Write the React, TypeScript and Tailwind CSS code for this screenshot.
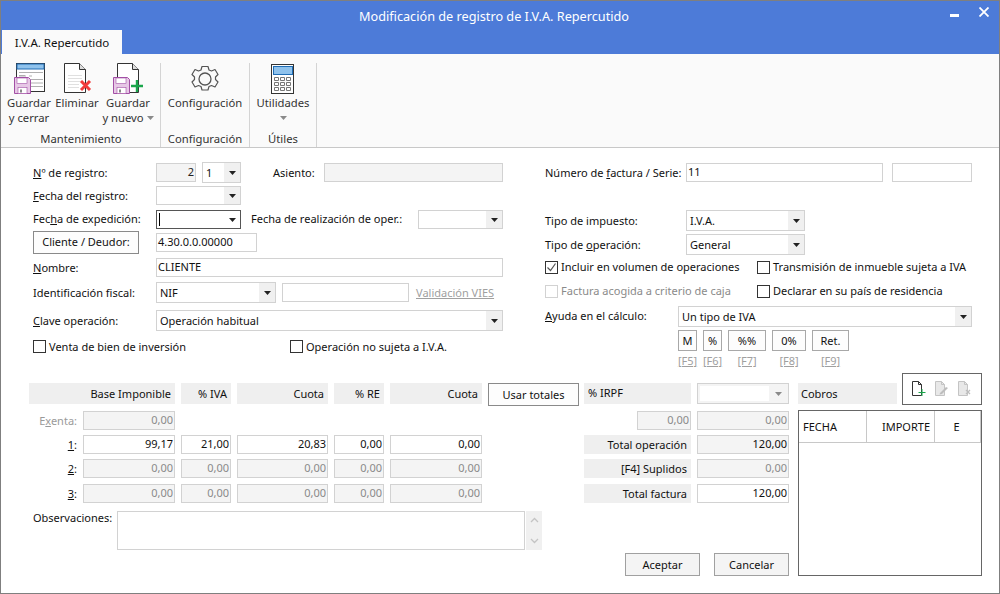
import type { ReactNode } from 'react';

const Caret = ({ muted }: { muted?: boolean }) => (
    <svg width="7" height="4" viewBox="0 0 7 4">
        <path d="M0 0h7L3.500 4z" fill={muted ? '#8a8a8a' : '#222'} />
    </svg>
);

const Field = ({ className, value, disabled, right }: { className: string; value?: string; disabled?: boolean; right?: boolean }) => (
    <div
        className={`${className} h-[19px] shrink-0 border border-[#d2d2d2] px-[1px] leading-[16px] ${disabled ? 'bg-[#f4f4f4] text-[#8a8a8a]' : 'bg-white'} ${right ? 'text-right' : ''}`}
    >
        {value}
    </div>
);

const Select = ({ className, value, h = 'h-[21px]' }: { className: string; value?: string; h?: string }) => (
    <div className={`${className} ${h} flex shrink-0 border border-[#d2d2d2] bg-white`}>
        <div className="flex-1 truncate pl-[3px] leading-[19px]">{value}</div>
        <div className="flex w-[16px] items-center justify-center bg-[#f0f0f0]">
            <Caret />
        </div>
    </div>
);

const Check = ({ label, checked, disabled, className, textClass }: { label: string; checked?: boolean; disabled?: boolean; className?: string; textClass?: string }) => (
    <div className={`flex h-[13px] items-center gap-[3px] ${className ?? ''} ${disabled ? 'text-[#8a8a8a]' : ''}`}>
        <div className={`flex h-[13px] w-[13px] shrink-0 items-center justify-center border bg-white ${disabled ? 'border-[#d2d2d2]' : 'border-[#333]'}`}>
            {checked && (
                <svg width="11" height="11" viewBox="0 0 11 11">
                    <path d="M1.500 5.500l3 3 5-7" fill="none" stroke="#555" strokeWidth="1.200" />
                </svg>
            )}
        </div>
        <span className={`whitespace-nowrap ${textClass ?? ''}`}>{label}</span>
    </div>
);

const Label = ({ children, className }: { children: ReactNode; className?: string }) => (
    <div className={`shrink-0 whitespace-nowrap pt-[1px] ${className ?? ''}`}>{children}</div>
);

const Floppy = ({ x }: { x: number }) => (
    <g transform={`translate(${x} 14)`}>
        <path d="M.5.500h14l2 2v14H.500z" fill="#e7c8e6" stroke="#a24fa5" />
        <rect x="3" y="1" width="10" height="5.500" fill="#fff" stroke="#a24fa5" strokeWidth=".6" />
        <rect x="4" y="10.500" width="9" height="6" fill="#fff" stroke="#a24fa5" strokeWidth=".6" />
        <rect x="6" y="12.500" width="2" height="3" fill="#888" />
    </g>
);

const SaveCloseIcon = () => (
    <svg width="36" height="32" viewBox="0 0 36 32">
        <rect x="5.500" y=".5" width="28" height="28" fill="#fff" stroke="#333" />
        <rect x="6" y="1" width="27" height="5" fill="#8fc2ec" stroke="#1f6db5" />
        <path d="M8 9.500h24M8 13h7m3 0h3M20 16.500h12M20 20h12M20 23.500h12M8 12.500h6" stroke="#b0b0b0" />
        <Floppy x={3} />
    </svg>
);

const DeleteIcon = () => (
    <svg width="32" height="32" viewBox="0 0 32 32">
        <path d="M3.500.5h15l6 6v23h-21z" fill="#fff" stroke="#333" />
        <path d="M18.500.5v6h6" fill="#ddd" stroke="#333" />
        <path d="M7 12.500h14M7 15.500h14M7 18.500h12M7 21.500h11M7 24.500h11" stroke="#e0e0e0" />
        <path d="M20 18l9 9m0-9l-9 9" stroke="#f23c3c" strokeWidth="3" />
    </svg>
);

const SaveNewIcon = () => (
    <svg width="36" height="32" viewBox="0 0 36 32">
        <path d="M7.500.5h15l6 6v23h-21z" fill="#fff" stroke="#333" />
        <path d="M22.500.5v6h6" fill="#ddd" stroke="#333" />
        <Floppy x={3} />
        <path d="M27 17v12M21 23h12" stroke="#1aa64b" strokeWidth="2.400" />
    </svg>
);

const GearIcon = () => (
    <svg width="32" height="32" viewBox="0 0 32 32">
        <circle cx="16" cy="16" r="6" fill="none" stroke="#555" strokeWidth="1.300" />
        <path
            d="M13 2h6l1 3.500 2.500 1 3.500-1.500 3 5-2.500 2.500v2.500L29 17.500l-3 5-3.500-1.500-2.500 1-1 3.500h-6l-1-3.500-2.500-1L6 22.500l-3-5 2.500-2.500v-2.500L3 10l3-5 3.500 1.500 2.500-1z"
            transform="translate(0 1.500)"
            fill="none"
            stroke="#555"
            strokeWidth="1.200"
            strokeLinejoin="round"
        />
    </svg>
);

const CalculatorIcon = () => (
    <svg width="32" height="32" viewBox="0 0 32 32">
        <rect x="4.500" y="1.500" width="22" height="29" fill="#fff" stroke="#333" />
        <rect x="6.500" y="3.500" width="19" height="8" fill="#8fc2ec" stroke="#1f6db5" />
        <path
            d="M7.500 14.500h4v3h-4zm6 0h4v3h-4zm6 0h4v3h-4zM7.500 19.500h4v3h-4zm6 0h4v3h-4zm6 0h4v3h-4zM7.500 24.500h4v3h-4zm6 0h4v3h-4zm6 0h4v3h-4z"
            fill="none"
            stroke="#777"
        />
    </svg>
);

const RibbonButton = ({ icon, lines, w, caret }: { icon: ReactNode; lines: ReactNode[]; w: string; caret?: boolean }) => (
    <div className={`${w} flex flex-col items-center`}>
        <div className="flex h-[32px] items-start justify-center">{icon}</div>
        {lines.map((line, i) => (
            <div key={i} className="flex h-[15px] items-center gap-[3px] whitespace-nowrap leading-[15px]">
                {line}
                {caret && i === lines.length - 1 && <Caret muted />}
            </div>
        ))}
    </div>
);

const Ribbon = () => (
    <div className="flex h-[94px] shrink-0 border-b border-[#c8c8c8] bg-[#fafafa] pt-[9px] text-[11.25px] text-[#333]">
        <div className="flex w-[160px] flex-col border-r border-[#d4d4d4] pl-[4px]">
            <div className="flex h-[63px]">
                <RibbonButton w="w-[48px]" icon={<SaveCloseIcon />} lines={['Guardar', 'y cerrar']} />
                <RibbonButton w="w-[48px]" icon={<DeleteIcon />} lines={['Eliminar']} />
                <RibbonButton w="w-[54px]" icon={<SaveNewIcon />} lines={['Guardar', 'y nuevo']} caret />
            </div>
            <div className="mt-[5px] pr-[3px] text-center leading-[15px]">Mantenimiento</div>
        </div>
        <div className="flex w-[89px] flex-col items-center border-r border-[#d4d4d4]">
            <div className="h-[63px]">
                <RibbonButton w="w-[88px]" icon={<GearIcon />} lines={['Configuración']} />
            </div>
            <div className="mt-[5px] leading-[15px]">Configuración</div>
        </div>
        <div className="flex w-[67px] flex-col items-center border-r border-[#d4d4d4]">
            <div className="h-[63px]">
                <RibbonButton
                    w="w-[66px]"
                    icon={<CalculatorIcon />}
                    lines={['Utilidades', <Caret key="c" muted />]}
                />
            </div>
            <div className="mt-[5px] leading-[15px]">Útiles</div>
        </div>
    </div>
);

const LeftForm = () => (
    <div className="w-[470px] shrink-0">
        <div className="flex h-[21px] items-center">
            <Label className="w-[123px]">
                <u>N</u>º de registro:
            </Label>
            <Field className="w-[40px] !text-[#222]" value="2" disabled right />
            <Select className="ml-[6px] w-[39px]" value="1" />
            <Label className="ml-[32px] w-[51px]">Asiento:</Label>
            <Field className="w-[179px]" disabled />
        </div>
        <div className="mt-[2px] flex h-[21px] items-center">
            <Label className="w-[123px]">
                <u>F</u>echa del registro:
            </Label>
            <Select className="w-[85px]" h="h-[19px]" />
        </div>
        <div className="mt-[3px] flex h-[21px] items-center">
            <Label className="w-[123px] !pt-0">
                Fec<u>h</u>a de expedición:
            </Label>
            <div className="flex h-[19px] w-[85px] shrink-0 border border-[#555] bg-white">
                <div className="flex-1 pl-[2px] pt-[2px]">
                    <div className="h-[13px] w-px bg-black" />
                </div>
                <div className="flex w-[16px] items-center justify-center">
                    <Caret />
                </div>
            </div>
            <Label className="ml-[10px] w-[167px] !pt-0">Fecha de realización de oper.:</Label>
            <Select className="w-[85px]" h="h-[19px]" />
        </div>
        <div className="mt-[1px] flex h-[23px] items-center">
            <div className="h-[23px] w-[106px] shrink-0 border border-[#8a8a8a] bg-[#fdfdfd] text-center leading-[20px]">Cliente / Deudor:</div>
            <Field className="ml-[17px] w-[101px]" value="4.30.0.0.00000" />
        </div>
        <div className="mt-[4px] flex h-[19px] items-center">
            <Label className="w-[123px]">
                <u>N</u>ombre:
            </Label>
            <Field className="w-[347px]" value="CLIENTE" />
        </div>
        <div className="mt-[5px] flex h-[21px] items-center">
            <Label className="w-[123px]">Identificación fiscal:</Label>
            <Select className="w-[120px]" value="NIF" />
            <Field className="ml-[6px] w-[127px]" />
            <Label className="ml-[7px] text-[#a0a0a0] underline">Validación VIES</Label>
        </div>
        <div className="mt-[7px] flex h-[21px] items-center">
            <Label className="w-[123px]">
                <u>C</u>lave operación:
            </Label>
            <Select className="w-[347px]" value="Operación habitual" />
        </div>
        <div className="mt-[9px] flex">
            <Check className="w-[257px]" textClass="pt-[1px]" label="Venta de bien de inversión" />
            <Check textClass="pt-[1px]" label="Operación no sujeta a I.V.A." />
        </div>
    </div>
);

const HELPERS = [
    { label: 'M', key: '[F5]', w: 'w-[19px]' },
    { label: '%', key: '[F6]', w: 'w-[19px]' },
    { label: '%%', key: '[F7]', w: 'w-[38px]' },
    { label: '0%', key: '[F8]', w: 'w-[34px]' },
    { label: 'Ret.', key: '[F9]', w: 'w-[37px]' },
];

const RightForm = () => (
    <div className="ml-[42px] w-[427px] shrink-0">
        <div className="flex h-[21px] items-center">
            <Label className="w-[141px]">
                Número de <u>f</u>actura / Serie:
            </Label>
            <Field className="w-[197px]" value="11" />
            <Field className="ml-[9px] w-[80px]" />
        </div>
        <div className="mt-[27px] flex h-[21px] items-center">
            <Label className="w-[141px]">Tipo de impuesto:</Label>
            <Select className="w-[119px]" value="I.V.A." />
        </div>
        <div className="mt-[3px] flex h-[21px] items-center">
            <Label className="w-[141px]">
                Tipo de <u>o</u>peración:
            </Label>
            <Select className="w-[119px]" value="General" />
        </div>
        <div className="mt-[6px] flex">
            <Check className="w-[212px]" label="Incluir en volumen de operaciones" checked />
            <Check label="Transmisión de inmueble sujeta a IVA" />
        </div>
        <div className="mt-[11px] flex">
            <Check className="w-[212px]" label="Factura acogida a criterio de caja" disabled />
            <Check label="Declarar en su país de residencia" />
        </div>
        <div className="mt-[8px] flex h-[21px] items-center">
            <Label className="w-[133px] !pt-0">
                <u>A</u>yuda en el cálculo:
            </Label>
            <Select className="w-[294px]" value="Un tipo de IVA" />
        </div>
        <div className="ml-[133px] mt-[3px] flex gap-[6px]">
            {HELPERS.map((h) => (
                <div key={h.key} className={`${h.w} flex flex-col items-center`}>
                    <div className="h-[21px] w-full border border-[#a8a8a8] bg-[#fdfdfd] text-center leading-[19px]">{h.label}</div>
                    <div className="mt-[3px] text-[#a0a0a0] underline leading-[13px]">{h.key}</div>
                </div>
            ))}
        </div>
    </div>
);

const COLS = ['w-[92px]', 'w-[50px]', 'w-[91px]', 'w-[50px]', 'w-[92px]'];

const AmountRow = ({ label, values, disabled, className }: { label: ReactNode; values: string[]; disabled?: boolean; className?: string }) => (
    <div className={`flex h-[19px] gap-[6px] ${className ?? ''}`}>
        <div className="w-[48px] shrink-0 text-right leading-[19px]">{label}</div>
        {values.map((value, i) => (
            <Field key={i} className={COLS[i]} value={value} disabled={disabled} right />
        ))}
    </div>
);

const HeadCell = ({ className, children }: { className: string; children: ReactNode }) => (
    <div className={`${className} h-[21px] shrink-0 bg-[#efefef] pr-[4px] text-right leading-[21px]`}>{children}</div>
);

const Amounts = () => (
    <div className="w-[550px] shrink-0 pt-[10px]">
        <div className="flex h-[21px] items-start gap-[6px]">
            <HeadCell className="w-[146px]">Base Imponible</HeadCell>
            <HeadCell className="w-[50px]">% IVA</HeadCell>
            <HeadCell className="w-[91px]">Cuota</HeadCell>
            <HeadCell className="w-[50px]">% RE</HeadCell>
            <HeadCell className="w-[92px]">Cuota</HeadCell>
            <div className="h-[23px] w-[91px] shrink-0 border border-[#8a8a8a] bg-[#fdfdfd] text-center leading-[21px]">Usar totales</div>
        </div>
        <div className="mt-[7px] flex h-[19px] gap-[6px]">
            <div className="w-[48px] shrink-0 text-right leading-[19px] text-[#9a9a9a]">
                E<u>x</u>enta:
            </div>
            <Field className="w-[92px]" value="0,00" disabled right />
        </div>
        <AmountRow className="mt-[5px]" label={<><u>1</u>:</>} values={['99,17', '21,00', '20,83', '0,00', '0,00']} />
        <AmountRow className="mt-[5px]" label={<><u>2</u>:</>} values={['0,00', '0,00', '0,00', '0,00', '0,00']} disabled />
        <AmountRow className="mt-[6px]" label={<><u>3</u>:</>} values={['0,00', '0,00', '0,00', '0,00', '0,00']} disabled />
        <div className="mt-[8px] flex pl-[4px]">
            <div className="w-[84px] shrink-0 leading-[14px]">Observaciones:</div>
            <div className="h-[39px] w-[408px] shrink-0 border border-[#d2d2d2] bg-white" />
            <div className="ml-px flex h-[39px] w-[16px] shrink-0 flex-col items-center justify-between bg-[#f0f0f0] py-[6px]">
                <svg width="9" height="6" viewBox="0 0 9 6">
                    <path d="M1 5l3.500-3.500L8 5" fill="none" stroke="#c4c4c4" strokeWidth="1.300" />
                </svg>
                <svg width="9" height="6" viewBox="0 0 9 6">
                    <path d="M1 1l3.500 3.500L8 1" fill="none" stroke="#c4c4c4" strokeWidth="1.300" />
                </svg>
            </div>
        </div>
    </div>
);

const TotalRow = ({ label, value, disabled, className }: { label: string; value: string; disabled?: boolean; className?: string }) => (
    <div className={`flex h-[19px] gap-[6px] ${className ?? ''}`}>
        <div className="w-[107px] shrink-0 bg-[#efefef] pr-[4px] text-right leading-[19px]">{label}</div>
        <Field className="w-[92px]" value={value} disabled={disabled} right />
    </div>
);

const Totals = () => (
    <div className="ml-[5px] w-[205px] shrink-0 pt-[10px]">
        <div className="flex h-[21px] gap-[6px]">
            <div className="w-[107px] shrink-0 bg-[#efefef] pl-[4px] leading-[19px]">% IRPF</div>
            <div className="flex h-[21px] w-[92px] shrink-0 items-center border border-[#d2d2d2] bg-[#f4f4f4] pl-[2px]">
                <div className="h-[15px] w-[69px] bg-white" />
                <div className="flex flex-1 justify-center">
                    <Caret muted />
                </div>
            </div>
        </div>
        <div className="mt-[7px] flex h-[19px] justify-end gap-[6px]">
            <Field className="w-[54px]" value="0,00" disabled right />
            <Field className="w-[92px]" value="0,00" disabled right />
        </div>
        <div className="mt-[5px] flex h-[19px] gap-[6px]">
            <div className="w-[107px] shrink-0 bg-[#efefef] pr-[4px] text-right leading-[19px]">Total operación</div>
            <Field className="w-[92px] !bg-[#f4f4f4]" value="120,00" right />
        </div>
        <TotalRow className="mt-[5px]" label="[F4] Suplidos" value="0,00" disabled />
        <TotalRow className="mt-[6px]" label="Total factura" value="120,00" />
        <div className="mt-[50px] flex justify-end gap-[14px]">
            <div className="h-[23px] w-[75px] border border-[#a0a0a0] bg-[#f4f4f4] text-center leading-[21px]">Aceptar</div>
            <div className="h-[23px] w-[75px] border border-[#a0a0a0] bg-[#f4f4f4] text-center leading-[21px]">Cancelar</div>
        </div>
    </div>
);

const DocIcon = ({ children, muted }: { children: ReactNode; muted?: boolean }) => (
    <svg width="14" height="16" viewBox="0 0 14 16">
        <path
            d="M.5.500h6l3 3v11h-9z"
            fill={muted ? '#e8e8e8' : '#fff'}
            stroke={muted ? '#c4c4c4' : '#333'}
        />
        <path d="M6.500.5v3h3" fill="none" stroke={muted ? '#c4c4c4' : '#333'} />
        {children}
    </svg>
);

const Cobros = () => (
    <div className="ml-[9px] w-[184px] shrink-0">
        <div className="flex h-[32px] items-start">
            <div className="mt-[10px] h-[21px] w-[99px] bg-[#efefef] pl-[3px] leading-[21px]">Cobros</div>
            <div className="ml-[5px] flex h-[32px] w-[80px] items-center gap-[9px] border border-[#666] pl-[9px]">
                <DocIcon>
                    <path d="M10 8v7M6.500 11.500h7" fill="none" stroke="#1aa64b" />
                </DocIcon>
                <DocIcon muted>
                    <path d="M5 12l6-6 2 1-6 6-2.500.5z" fill="#bdbdbd" />
                </DocIcon>
                <DocIcon muted>
                    <path d="M8 9l4 4m0-4l-4 4" stroke="#bdbdbd" strokeWidth="1.300" />
                </DocIcon>
            </div>
        </div>
        <div className="mt-[5px] h-[166px] border border-[#666] bg-white">
            <div className="flex h-[32px] border-b border-[#c8c8c8] leading-[31px]">
                <div className="w-[68px] border-r border-[#c8c8c8] pl-[4px]">FECHA</div>
                <div className="w-[68px] border-r border-[#c8c8c8] pr-[4px] text-right">IMPORTE</div>
                <div className="w-[46px] border-r border-[#c8c8c8] pr-[2px] text-center">E</div>
            </div>
        </div>
    </div>
);

export default function App() {
    return (
        <div className="flex h-[594px] w-[1000px] flex-col overflow-hidden border border-[#7f7f7f] bg-white font-['Noto_Sans',sans-serif] text-[11px] text-[#111]">
            <div className="relative h-[53px] shrink-0 bg-[#4d7bd8]">
                <div className="pr-[12px] pt-[6px] text-center text-[12.7px] leading-[18px] text-white">Modificación de registro de I.V.A. Repercutido</div>
                <div className="absolute left-[949px] top-[13px] h-[3px] w-[9px] bg-white" />
                <svg className="absolute left-[978px] top-[6px]" width="10" height="10" viewBox="0 0 10 10">
                    <path d="M.5.500l9 9m0-9l-9 9" stroke="#fff" strokeWidth="1.800" />
                </svg>
                <div className="absolute bottom-0 left-px h-[24px] w-[120px] bg-[#fafafa] text-center text-[11.5px] leading-[25px]">I.V.A. Repercutido</div>
            </div>
            <Ribbon />
            <div className="flex pl-[32px] pt-[14px]">
                <LeftForm />
                <RightForm />
            </div>
            <div className="mt-[6px] flex pl-[28px]">
                <Amounts />
                <Totals />
                <Cobros />
            </div>
        </div>
    );
}
